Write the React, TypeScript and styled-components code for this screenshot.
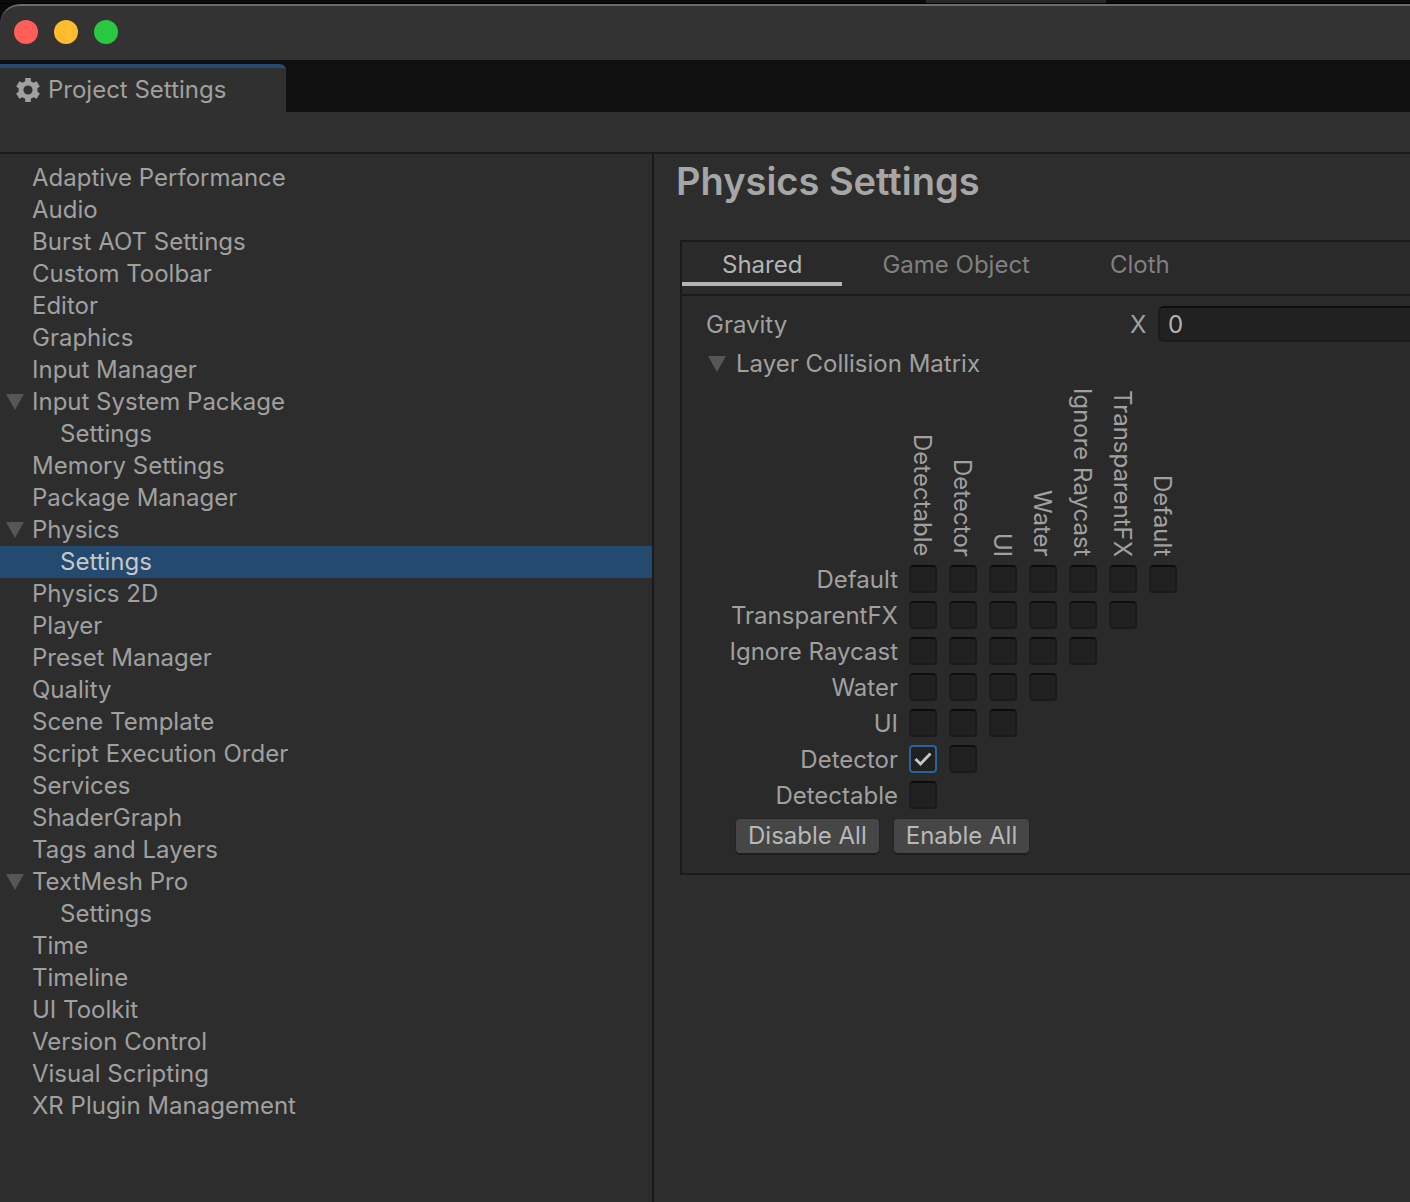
import React, { useState } from "react";
import styled, { createGlobalStyle } from "styled-components";

const c = {
  desktop: "#0b0b0b",
  title: "#333333",
  dock: "#101010",
  bar: "#303030",
  page: "#2d2d2d",
  panel: "#2a2a2a",
  line: "#1b1b1b",
  field: "#212121",
  accent: "#244a6f",
  focus: "#2e619b",
  text: "#a0a0a0",
  bright: "#c8c8c8",
  dim: "#808080",
  arrow: "#565656",
};

const Global = createGlobalStyle`
  * { box-sizing: border-box; }
  body {
    margin: 0;
    background: ${c.desktop};
    color: ${c.text};
    font-family: Inter, "Liberation Sans", sans-serif;
    font-size: 24px;
    line-height: 32px;
    font-optical-sizing: none;
  }
  button, input { font: inherit; color: inherit; }
`;

const Screen = styled.div`
  min-height: 100vh;
  display: flex;
  flex-direction: column;
  overflow: hidden;
`;

const Desktop = styled.div`
  height: 4px;
  display: flex;
  justify-content: center;
  padding-left: 622px;
  border-bottom: 1px solid #000;
`;

const BackWindow = styled.div`
  width: 180px;
  background: #292929;
`;

const Window = styled.div`
  flex: 1;
  display: flex;
  flex-direction: column;
  overflow: hidden;
  background: ${c.page};
  border-top-left-radius: 20px;
`;

const TitleBar = styled.header`
  height: 56px;
  display: flex;
  align-items: center;
  gap: 16px;
  padding: 0 14px 2px;
  background: ${c.title};
  border-top: 2px solid #6b6c6b;
  border-top-left-radius: 20px;
`;

const Light = styled.button<{ $color: string }>`
  width: 24px;
  height: 24px;
  padding: 0;
  border: 0;
  border-radius: 50%;
  background: ${(p) => p.$color};
`;

const Dock = styled.div`
  height: 52px;
  display: flex;
  padding-top: 4px;
  background: ${c.dock};
`;

const DockTab = styled.button`
  width: 286px;
  display: flex;
  align-items: center;
  gap: 8px;
  padding: 0 16px 1px;
  border: 0;
  border-top: 4px solid ${c.accent};
  border-top-right-radius: 6px;
  background: ${c.bar};
`;

const Toolbar = styled.div`
  height: 42px;
  background: ${c.bar};
  border-bottom: 2px solid ${c.line};
`;

const Body = styled.div`
  flex: 1;
  display: grid;
  grid-template-columns: 654px minmax(0, 1fr);
`;

const Sidebar = styled.nav`
  padding: 8px 0;
  border-right: 2px solid ${c.line};
`;

const Tree = styled.ul`
  list-style: none;
  margin: 0;
  padding: 0;
`;

const TreeItem = styled.button<{ $child?: boolean; $selected?: boolean }>`
  width: 100%;
  height: 32px;
  display: flex;
  align-items: center;
  padding: 0 0 1px ${(p) => (p.$child ? 60 : 6)}px;
  border: 0;
  text-align: left;
  background: ${(p) => (p.$selected ? c.accent : "transparent")};
  color: ${(p) => (p.$selected ? c.bright : c.text)};
`;

const ArrowSlot = styled.span`
  width: 26px;
  display: flex;
  padding-top: 1px;
`;

const Main = styled.main`
  padding-left: 26px;
`;

const Heading = styled.h1`
  margin: 0;
  height: 86px;
  padding-top: 3px;
  margin-left: -4px;
  font-size: 38px;
  line-height: 48px;
  font-weight: 600;
  color: #a6a6a6;
`;

const Panel = styled.section`
  background: ${c.panel};
  border: 2px solid ${c.line};
  border-right: 0;
`;

const Tabs = styled.div`
  height: 54px;
  display: flex;
  align-items: flex-start;
  border-bottom: 2px solid ${c.line};
`;

const Tab = styled.button<{ $active: boolean }>`
  height: 44px;
  padding: 6px 40px 0;
  border: 0;
  border-bottom: 4px solid ${(p) => (p.$active ? "#b4b4b4" : "transparent")};
  background: none;
  color: ${(p) => (p.$active ? "#b4b4b4" : c.dim)};
`;

const PanelBody = styled.div`
  padding: 10px 0 20px 24px;
`;

const Property = styled.div`
  display: grid;
  grid-template-columns: 424px 28px minmax(0, 1fr);
  align-items: end;
`;

const Field = styled.input`
  width: 100%;
  height: 36px;
  padding: 0 8px;
  border: 2px solid ${c.line};
  border-top-color: #0d0d0d;
  border-right: 0;
  border-radius: 6px 0 0 6px;
  background: ${c.field};
  color: #b4b4b4;
  outline: none;
`;

const PropertyName = styled.span`
  line-height: 34px;
`;

const AxisLabel = styled.label`
  line-height: 34px;
`;

const Foldout = styled.button`
  height: 38px;
  display: flex;
  align-items: center;
  gap: 10px;
  margin-top: 2px;
  padding: 1px 2px 0;
  border: 0;
  background: none;
`;

const Matrix = styled.table`
  margin-left: 16px;
  border-collapse: collapse;
`;

const ColumnHead = styled.th`
  height: 179px;
  padding: 0 0 4px;
  vertical-align: bottom;
  font-weight: 400;
`;

const ColumnText = styled.span`
  display: block;
  margin: 0 auto;
  width: 30px;
  writing-mode: vertical-rl;
`;

const RowHead = styled.th`
  height: 36px;
  min-width: 181px;
  padding: 2px 5px 0 0;
  text-align: right;
  font-weight: 400;
`;

const Cell = styled.td`
  width: 40px;
  height: 36px;
  padding: 0 6px;
`;

const Toggle = styled.label`
  display: grid;
  width: 28px;
  height: 28px;
  place-items: center;

  > * {
    grid-area: 1 / 1;
  }
`;

const Box = styled.input`
  appearance: none;
  width: 28px;
  height: 28px;
  margin: 0;
  border: 2px solid ${c.line};
  border-top-color: #0d0d0d;
  border-radius: 4px;
  background: ${c.field};

  &:checked {
    border-color: ${c.focus};
  }
`;

const Actions = styled.div`
  display: flex;
  gap: 15px;
  margin: 6px 0 0 30px;
`;

const Action = styled.button`
  height: 34px;
  padding: 0 12px;
  border: 0;
  border-radius: 4px;
  background: #464646;
  color: #b8b8b8;
  box-shadow: 0 2px 0 #1d1d1d, 0 0 0 1px #252525;
`;

const Triangle = () => (
  <svg width="18" height="16" viewBox="0 0 18 16" aria-hidden="true">
    <path d="M0 0H18L9 16Z" fill={c.arrow} />
  </svg>
);

const Check = () => (
  <svg width="18" height="16" viewBox="0 0 18 16" pointerEvents="none" aria-hidden="true">
    <path d="M1.5 8L6.5 13L16.5 2.5" fill="none" stroke="#c8c8c8" strokeWidth="2.8" />
  </svg>
);

const Gear = () => (
  <svg width="24" height="24" viewBox="0 0 24 24" aria-hidden="true">
    <path
      fill="#a0a0a0"
      fillRule="evenodd"
      d="M9.2 0H14.8V3.2L17.6 4.8L20.6 3.2L23.8 8.4L21.4 10.2V13.8L23.8 15.6L20.6 20.8L17.6 19.2L14.8 20.8V24H9.2V20.8L6.4 19.2L3.4 20.8L0.2 15.6L2.6 13.8V10.2L0.2 8.4L3.4 3.2L6.4 4.8L9.2 3.2ZM12 7.4A4.6 4.6 0 1 0 12 16.6A4.6 4.6 0 1 0 12 7.4Z"
    />
  </svg>
);

type Item = { label: string; open?: boolean; child?: boolean };

const items: Item[] = [
  { label: "Adaptive Performance" },
  { label: "Audio" },
  { label: "Burst AOT Settings" },
  { label: "Custom Toolbar" },
  { label: "Editor" },
  { label: "Graphics" },
  { label: "Input Manager" },
  { label: "Input System Package", open: true },
  { label: "Settings", child: true },
  { label: "Memory Settings" },
  { label: "Package Manager" },
  { label: "Physics", open: true },
  { label: "Settings", child: true },
  { label: "Physics 2D" },
  { label: "Player" },
  { label: "Preset Manager" },
  { label: "Quality" },
  { label: "Scene Template" },
  { label: "Script Execution Order" },
  { label: "Services" },
  { label: "ShaderGraph" },
  { label: "Tags and Layers" },
  { label: "TextMesh Pro", open: true },
  { label: "Settings", child: true },
  { label: "Time" },
  { label: "Timeline" },
  { label: "UI Toolkit" },
  { label: "Version Control" },
  { label: "Visual Scripting" },
  { label: "XR Plugin Management" },
];

const layers = ["Default", "TransparentFX", "Ignore Raycast", "Water", "UI", "Detector", "Detectable"];
const columns = [...layers].reverse();
const tabs = ["Shared", "Game Object", "Cloth"];

const allPairs = layers.flatMap((row, r) =>
  columns.slice(0, layers.length - r).map((col) => `${row}/${col}`)
);

export default function App() {
  const [selected, setSelected] = useState(12);
  const [tab, setTab] = useState("Shared");
  const [gravity, setGravity] = useState("0");
  const [open, setOpen] = useState(true);
  const [pairs, setPairs] = useState<string[]>(["Detector/Detectable"]);

  const toggle = (key: string) =>
    setPairs((p) => (p.includes(key) ? p.filter((k) => k !== key) : [...p, key]));

  return (
    <>
      <Global />
      <Screen>
        <Desktop>
          <BackWindow />
        </Desktop>
        <Window>
          <TitleBar>
            <Light $color="#ff5f57" aria-label="Close" />
            <Light $color="#febc2e" aria-label="Minimize" />
            <Light $color="#28c840" aria-label="Zoom" />
          </TitleBar>
          <Dock>
            <DockTab>
              <Gear />
              Project Settings
            </DockTab>
          </Dock>
          <Toolbar />
          <Body>
            <Sidebar>
              <Tree>
                {items.map((item, i) => (
                  <li key={i}>
                    <TreeItem
                      $child={item.child}
                      $selected={i === selected}
                      onClick={() => setSelected(i)}
                    >
                      {!item.child && <ArrowSlot>{item.open && <Triangle />}</ArrowSlot>}
                      {item.label}
                    </TreeItem>
                  </li>
                ))}
              </Tree>
            </Sidebar>
            <Main>
              <Heading>Physics Settings</Heading>
              <Panel>
                <Tabs role="tablist">
                  {tabs.map((name) => (
                    <Tab
                      key={name}
                      role="tab"
                      aria-selected={tab === name}
                      $active={tab === name}
                      onClick={() => setTab(name)}
                    >
                      {name}
                    </Tab>
                  ))}
                </Tabs>
                <PanelBody>
                  <Property>
                    <PropertyName>Gravity</PropertyName>
                    <AxisLabel htmlFor="gravity-x">X</AxisLabel>
                    <Field
                      id="gravity-x"
                      value={gravity}
                      onChange={(e) => setGravity(e.target.value)}
                    />
                  </Property>
                  <Foldout aria-expanded={open} onClick={() => setOpen(!open)}>
                    <Triangle />
                    Layer Collision Matrix
                  </Foldout>
                  {open && (
                    <>
                      <Matrix>
                        <thead>
                          <tr>
                            <td />
                            {columns.map((col) => (
                              <ColumnHead key={col} scope="col">
                                <ColumnText>{col}</ColumnText>
                              </ColumnHead>
                            ))}
                          </tr>
                        </thead>
                        <tbody>
                          {layers.map((row, r) => (
                            <tr key={row}>
                              <RowHead scope="row">{row}</RowHead>
                              {columns.slice(0, layers.length - r).map((col) => {
                                const key = `${row}/${col}`;
                                const on = pairs.includes(key);
                                return (
                                  <Cell key={col}>
                                    <Toggle>
                                      <Box
                                        type="checkbox"
                                        aria-label={`${row} and ${col}`}
                                        checked={on}
                                        onChange={() => toggle(key)}
                                      />
                                      {on && <Check />}
                                    </Toggle>
                                  </Cell>
                                );
                              })}
                            </tr>
                          ))}
                        </tbody>
                      </Matrix>
                      <Actions>
                        <Action onClick={() => setPairs([])}>Disable All</Action>
                        <Action onClick={() => setPairs(allPairs)}>Enable All</Action>
                      </Actions>
                    </>
                  )}
                </PanelBody>
              </Panel>
            </Main>
          </Body>
        </Window>
      </Screen>
    </>
  );
}
